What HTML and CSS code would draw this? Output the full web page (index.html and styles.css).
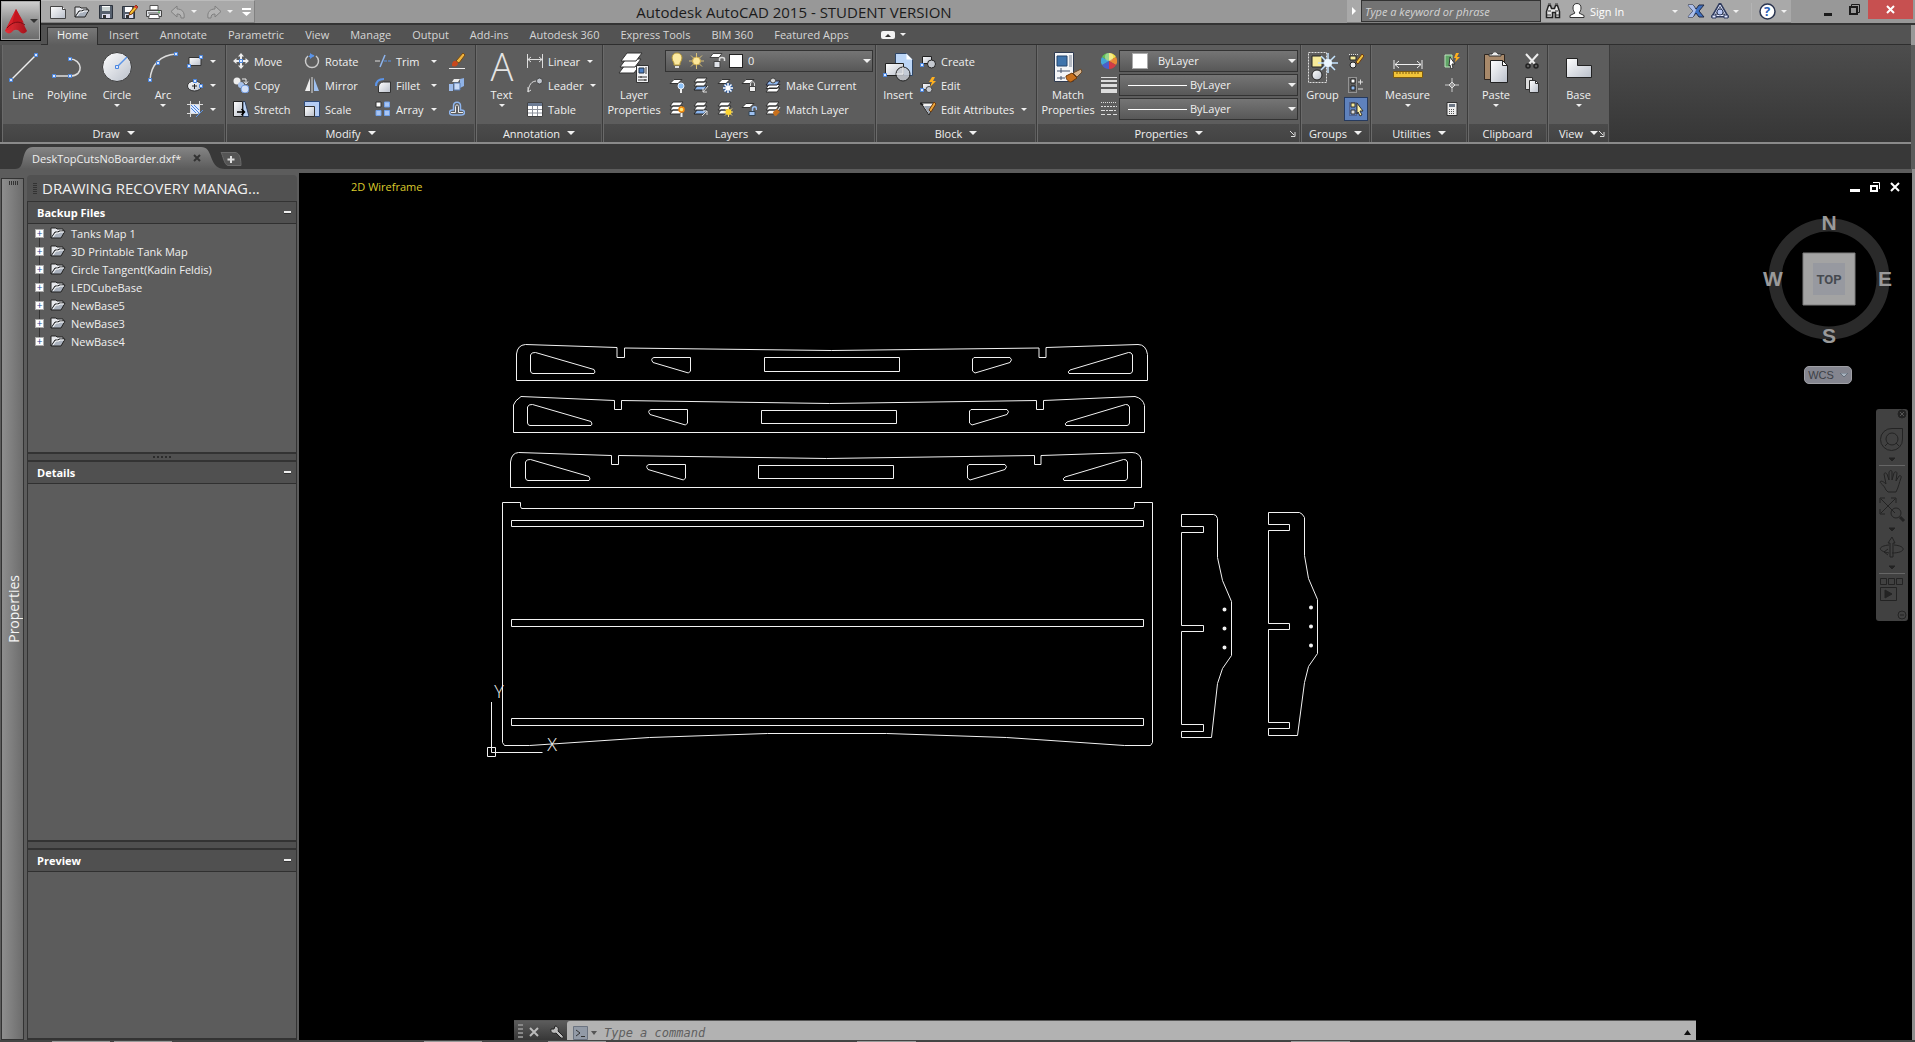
FILE: index.html
```html
<!DOCTYPE html>
<html lang="en">
<head>
<meta charset="utf-8">
<title>Autodesk AutoCAD 2015 - STUDENT VERSION</title>
<link rel="stylesheet" href="styles.css">
</head>
<body>
<svg class="defs" aria-hidden="true">
  <defs>
    <linearGradient id="silver" x1="0" y1="0" x2="1" y2="1"><stop offset="0" stop-color="#fff"/><stop offset="1" stop-color="#b9bfca"/></linearGradient>
    <linearGradient id="red" x1="0" y1="0" x2="1" y2="0"><stop offset="0" stop-color="#e8323a"/><stop offset="1" stop-color="#a5121b"/></linearGradient>
    <linearGradient id="tabfill" x1="0" y1="0" x2="0" y2="1"><stop offset="0" stop-color="#858585"/><stop offset="1" stop-color="#5c5c5c"/></linearGradient>
    <symbol id="folder" viewBox="0 0 16 12"><path d="M1 11V1h5l1 1h6v3" fill="#e6e8ec" stroke="#222"/><path d="M1 11 5 5h3l1-1h6l-4 7z" fill="#a9b1bd" stroke="#222"/><path d="M3 10 6 6h3l1-1h4" fill="none" stroke="#fff"/></symbol>
    <symbol id="sheet" viewBox="0 0 16 16"><path d="M5 2.500h8l-4 4H1z" fill="#fff" stroke="#333"/></symbol>
    <symbol id="sheets" viewBox="0 0 16 16"><path d="M4 9h10l-3 4H1zM4 5h10l-3 4H1zM4 1h10l-3 4H1z" fill="#fff" stroke="#333"/></symbol>
    <symbol id="sheetsblue" viewBox="0 0 16 16"><path d="M4 9h10l-3 4H1z" fill="#8bb6f0" stroke="#222"/><path d="M4 5h10l-3 4H1zM4 1h10l-3 4H1z" fill="#fff" stroke="#333"/></symbol>
  </defs>
</svg>

<header class="top">
  <button class="app" aria-label="Application menu">
    <svg width="24" height="26" viewBox="0 0 24 26"><path d="M12 1 23 23c-2 3-5 3-7 1-2-3-6-3-8 0-2 2-5 2-7-1z" fill="url(#red)"/><path d="M12 1 1 23l6-2z" fill="#d8222b"/><path d="M12 1 8 16c5-3 9-3 12-1z" fill="#c4161f"/><path d="M3 20c5-6 12-8 18-3" fill="none" stroke="#7d0c13"/></svg>
    <i class="caret dark"></i>
  </button>
  <div class="titlebar">
    <div class="quick">
      <button aria-label="New"><svg width="16" height="14" viewBox="0 0 16 14"><path d="M.5 1.500h12l3 3v9H.5z" fill="url(#silver)" stroke="#444"/><path d="M12.500 1.500v3h3" fill="#fff" stroke="#444"/></svg></button>
      <button aria-label="Open"><svg width="16" height="12"><use href="#folder"/></svg></button>
      <button aria-label="Save"><svg width="16" height="16" viewBox="0 0 16 16"><path d="M1.500 1.500h13v13h-13z" fill="#56606e" stroke="#2c323c"/><path d="M4 2h8v5H4z" fill="#fff"/><path d="M4 4h8M4 6h8" stroke="#9aa"/><path d="M4 10h8v4H4z" fill="#dde"/><path d="M5 11h3v3H5z" fill="#333"/></svg></button>
      <button aria-label="Save as"><svg width="16" height="16" viewBox="0 0 16 16"><path d="M.5 2.500h12v12H.5z" fill="#56606e" stroke="#2c323c"/><path d="M3 3h7v5H3z" fill="#fff"/><path d="M3 10h8v4H3z" fill="#dde"/><path d="M4 11h3v3H4z" fill="#333"/><path d="m7 11 1-3 6-7 2 2-6 7z" fill="#f5c030" stroke="#7a3a10"/><path d="m13 2 2 2" stroke="#d33" stroke-width="2"/></svg></button>
      <button aria-label="Plot"><svg width="16" height="16" viewBox="0 0 16 16"><path d="M4 1.500h8V6H4z" fill="#fff" stroke="#555"/><path d="M.5 6.500h15v6H.5z" fill="#e4e6ea" stroke="#444"/><path d="M2 9h12" stroke="#555"/><path d="M3.500 10.500h9l1 4h-11z" fill="#fff" stroke="#555"/><path d="M12 8h2" stroke="#4c4"/></svg></button>
      <button aria-label="Undo"><svg width="16" height="14" viewBox="0 0 16 14"><path d="M7 1v3c5 0 8 3 7 9h-3c0-3-1-4-4-4v3L1 6.500z" fill="#b4b4b4" stroke="#808080"/></svg></button>
      <i class="caret"></i>
      <button aria-label="Redo"><svg width="16" height="14" viewBox="0 0 16 14"><path d="M9 1v3C4 4 1 7 2 13h3c0-3 1-4 4-4v3l6-5.500z" fill="#b4b4b4" stroke="#808080"/></svg></button>
      <i class="caret"></i>
      <button aria-label="Customize" class="customize"><svg width="9" height="8" viewBox="0 0 9 8"><path d="M0 0h9v2H0zM0 4h9L4.500 8z" fill="#fff"/></svg></button>
    </div>
    <h1>Autodesk AutoCAD 2015 - STUDENT VERSION</h1>
    <div class="info">
      <button class="expand" aria-label="Collapse search"><svg width="4" height="8"><path d="M0 0l4 4-4 4z" fill="#fff"/></svg></button>
      <input class="search" type="text" placeholder="Type a keyword or phrase" aria-label="Search">
      <button class="find" aria-label="Search"><svg width="16" height="16" viewBox="0 0 16 16"><path d="M1.500 14.500v-6l2-6h2l1 3h3l1-3h2l2 6v6h-4v-5h-3v5z" fill="#e8e8e8" stroke="#222" stroke-width="1.500"/><path d="M3 8h3M10 8h3M2 12h4M10 12h4M3 1h3M10 1h3" stroke="#333"/></svg></button>
      <button class="signin"><svg width="16" height="16" viewBox="0 0 16 16"><path d="M8 .5c3 0 4 2 4 4.500 0 2-1 4-2 5l5 2.500v2H1v-2L6 10c-1-1-2-3-2-5C4 2.500 5 .5 8 .5z" fill="#fff" stroke="#333"/></svg>Sign In<i class="caret"></i></button>
      <button aria-label="Exchange"><svg width="18" height="16" viewBox="0 0 18 16"><path d="M1 2h5l3 4 3-4h5l-5 6 5 6h-5l-3-4-3 4H1l5-6z" fill="#3d6fc0" stroke="#222a44"/><path d="M1 2h5l3 5-3 7H1l5-6z" fill="#aebfe8"/></svg></button>
      <button class="connect" aria-label="Stay connected"><svg width="18" height="16" viewBox="0 0 18 16"><path d="M9 1 16 13H2z" fill="none" stroke="#2f3b5e" stroke-width="3"/><path d="M9 2 15 12.500H3z" fill="none" stroke="#e6ebff"/><circle cx="9" cy="9" r="3" fill="#b9c8f2" stroke="#2f3b5e"/><path d="M1 12h4v3H1zM13 12h4v3h-4z" fill="#dfe6ff" stroke="#2f3b5e"/></svg><i class="caret"></i></button>
      <button class="help" aria-label="Help"><svg width="17" height="17" viewBox="0 0 17 17"><circle cx="8.500" cy="8.500" r="7.500" fill="#fff" stroke="#2b3550" stroke-width="1.500"/><text x="8" y="13" text-anchor="middle" class="qmark">?</text></svg><i class="caret"></i></button>
    </div>
    <div class="window">
      <button aria-label="Minimize"><svg width="10" height="12"><path d="M1 9h8v3H1z" fill="#1b1b1b"/></svg></button>
      <button aria-label="Restore"><svg width="11" height="11" viewBox="0 0 11 11"><path d="M2.500 2.500v-2h8v8h-2" fill="none" stroke="#1b1b1b"/><path d="M1 3h7v7H1z" fill="none" stroke="#1b1b1b" stroke-width="2"/></svg></button>
      <button class="close" aria-label="Close"><svg width="9" height="9"><path d="M1 1l7 7M8 1 1 8" stroke="#fff" stroke-width="2"/></svg></button>
    </div>
  </div>
  <nav class="tabs">
    <a href="#home" class="on">Home</a><a href="#insert">Insert</a><a href="#annotate">Annotate</a><a href="#parametric">Parametric</a><a href="#view">View</a><a href="#manage">Manage</a><a href="#output">Output</a><a href="#addins">Add-ins</a><a href="#a360">Autodesk 360</a><a href="#express">Express Tools</a><a href="#bim">BIM 360</a><a href="#apps">Featured Apps</a>
    <button class="fold" aria-label="Minimize ribbon"><svg width="14" height="8" viewBox="0 0 14 8"><rect width="14" height="8" rx="2" fill="#f2f2f2"/><path d="M4 6h6L7 3z" fill="#333"/></svg><i class="caret"></i></button>
  </nav>
</header>

<main class="ribbon">
  <section class="panel draw">
    <div class="body">
      <button class="big"><svg width="32" height="32" viewBox="0 0 32 32"><path d="M4 28 29 3" stroke="#eee" stroke-width="1.500"/><g class="grip"><path d="M2.500 26.500h3v3h-3zM27.500 1.500h3v3h-3z"/></g></svg>Line</button>
      <button class="big"><svg width="32" height="32" viewBox="0 0 32 32"><path d="M3 24h16c15 0 12-17 0-17" fill="none" stroke="#ddd" stroke-width="1.500"/><g class="grip"><path d="M1.500 22.500h3v3h-3zM17.500 22.500h3v3h-3zM17.500 5.500h3v3h-3z"/></g></svg>Polyline</button>
      <button class="big"><svg width="32" height="32" viewBox="0 0 32 32"><circle cx="16" cy="15" r="14.500" fill="url(#silver)" stroke="#3b3b3b"/><path d="m16 15 10-10" stroke="#5b94e8" stroke-width="1.500"/><g class="grip"><path d="M14.500 13.500h3v3h-3z"/></g></svg>Circle<i class="caret"></i></button>
      <button class="big"><svg width="32" height="32" viewBox="0 0 32 32"><path d="M3 28C4 12 14 3 29 2" fill="none" stroke="#ddd" stroke-width="1.500"/><g class="grip"><path d="M1.500 26.500h3v3h-3zM9.500 9.500h3v3h-3zM27.500.5h3v3h-3z"/></g></svg>Arc<i class="caret"></i></button>
      <div class="col">
        <button class="cmd" aria-label="Rectangle"><svg width="16" height="16" viewBox="0 0 16 16"><path d="M2 4.500h12v8H2z" fill="url(#silver)" stroke="#333"/><g class="grip"><path d="M.5 11.500h3v3h-3zM12.500 2.500h3v3h-3z"/></g></svg><i class="caret"></i></button>
        <button class="cmd" aria-label="Ellipse"><svg width="16" height="16" viewBox="0 0 16 16"><ellipse cx="7.500" cy="9" rx="7" ry="5" fill="url(#silver)" stroke="#333"/><path d="M5 9h5M7.500 7v5" stroke="#222"/><g class="grip"><path d="M6.500 2.500h3v3h-3zM12.500 7.500h3v3h-3z"/></g></svg><i class="caret"></i></button>
        <button class="cmd" aria-label="Hatch"><svg width="16" height="16" viewBox="0 0 16 16"><path d="M3.500 3.500h9v9h-9z" fill="#dfeaff"/><path d="m4 7 5 5M4 4l8 8M7 4l5 5" stroke="#4a86e0"/><path d="M3.500 0v16M12.500 0v12M0 3.500h16M0 12.500h11" stroke="#ddd"/><path d="m9 16 7-7" stroke="#5b94e8"/></svg><i class="caret"></i></button>
      </div>
    </div>
    <h2>Draw<i class="caret wide"></i></h2>
  </section>

  <section class="panel modify">
    <div class="body">
      <div class="col">
        <button class="cmd"><svg width="16" height="16" viewBox="0 0 16 16"><path d="m8 0 3 3.500H9V6H7V3.500H5zM8 16l3-3.500H9V10H7v2.500H5zM0 8l3.500-3v2H6v2H3.500v2zM16 8l-3.500-3v2H10v2h2.500v2z" fill="#eee"/><g class="grip"><path d="M6.500 6.500h3v3h-3z"/></g></svg>Move</button>
        <button class="cmd"><svg width="16" height="16" viewBox="0 0 16 16"><circle cx="4" cy="4" r="3.500" fill="#eee"/><path d="M9 2h4v4M11 4.500 13 7l2-2.500" fill="none" stroke="#eee"/><circle cx="8" cy="8" r="3" fill="#a9c2ea"/><circle cx="12" cy="12" r="4" fill="#d3e0f7" stroke="#6f9ade"/></svg>Copy</button>
        <button class="cmd"><svg width="16" height="16" viewBox="0 0 16 16"><path d="M10 .5h2l4 15h-6z" fill="#bcd4f6" stroke="#30405c"/><path d="M.5.5h9v15h-9z" fill="url(#silver)" stroke="#222"/><path d="M4 11h7M8.500 8l3 3-3 3" fill="none" stroke="#000" stroke-width="1.500"/></svg>Stretch</button>
      </div>
      <div class="col">
        <button class="cmd"><svg width="16" height="16" viewBox="0 0 16 16"><path d="M4 3a6.500 6.500 0 1 0 8 0" fill="none" stroke="#ccc" stroke-width="1.500"/><path d="M5 4c1-2 3-2 5-1" fill="none" stroke="#5b94e8" stroke-width="1.500"/><path d="m6 0 4 3-4 3z" fill="#5b94e8"/></svg>Rotate</button>
        <button class="cmd"><svg width="16" height="16" viewBox="0 0 16 16"><path d="M6 1v13H1z" fill="#eee"/><path d="M10 1v13h5z" fill="#9fc0ee"/><path d="M8 0v16" stroke="#ddd"/></svg>Mirror</button>
        <button class="cmd"><svg width="16" height="16" viewBox="0 0 16 16"><path d="M.5.5h15v15H.5z" fill="#b5cdf4" stroke="#2d4a7a"/><path d="M.5 5.500h10v10H.5z" fill="url(#silver)" stroke="#333"/></svg>Scale</button>
      </div>
      <div class="col trim">
        <button class="cmd"><svg width="16" height="16" viewBox="0 0 16 16"><path d="M0 8h5" stroke="#ddd"/><path d="M9 8h3M13 8h3" stroke="#5b94e8"/><path d="m5 14 5-12" stroke="#8eb5ee" stroke-width="1.500"/></svg>Trim<i class="caret"></i></button>
        <button class="cmd"><svg width="16" height="16" viewBox="0 0 16 16"><path d="M3.500 15.500V10c0-3 2-5 5-5h7v10.500z" fill="url(#silver)" stroke="#333"/><path d="M1 9c0-5 3-7 8-7" fill="none" stroke="#5b94e8" stroke-width="2"/></svg>Fillet<i class="caret"></i></button>
        <button class="cmd"><svg width="16" height="16" viewBox="0 0 16 16"><path d="M1 1h5v5H1z" fill="#fff" stroke="#333"/><path d="M9.500 1h5v5h-5zM1 9.500h5v5H1zM9.500 9.500h5v5h-5z" fill="#a9c5f2" stroke="#6fa0ea"/></svg>Array<i class="caret"></i></button>
      </div>
      <div class="col">
        <button class="cmd" aria-label="Erase"><svg width="16" height="16" viewBox="0 0 16 16"><path d="m7 8 7-8 2 2-6 8z" fill="#f0b540" stroke="#7a4a10"/><path d="M3 12c0-3 2-5 4-4l2 2c0 3-3 4-6 3z" fill="#c9481c"/><path d="M0 15.500h16" stroke="#eee"/></svg></button>
        <button class="cmd" aria-label="Explode"><svg width="16" height="16" viewBox="0 0 16 16"><path d="m3 5 2-3h6l-2 3z" fill="#eee"/><path d="m11 2 4-1v8l-4 2z" fill="#8fb2e6"/><path d="M0 7h4v7H0z" fill="#9dbcec"/><path d="M5 6h6v7H5z" fill="#c8daf6" stroke="#5a7fb5"/></svg></button>
        <button class="cmd" aria-label="Offset"><svg width="16" height="16" viewBox="0 0 16 16"><path d="M4.500 9V5c0-5 7-5 7 0v4h1c4 0 4 5 0 5h-9c-4 0-4-5 0-5z" fill="none" stroke="#8eb5ee" stroke-width="1.500"/><path d="M2 11.500h4.500V5.500c0-2 3-2 3 0v6H14" fill="none" stroke="#eee"/></svg></button>
      </div>
    </div>
    <h2>Modify<i class="caret wide"></i></h2>
  </section>

  <section class="panel annotation">
    <div class="body">
      <button class="big"><svg width="32" height="32" viewBox="0 0 32 32"><text x="16" y="29" text-anchor="middle" class="letter">A</text></svg>Text<i class="caret"></i></button>
      <div class="col">
        <button class="cmd"><svg width="16" height="16" viewBox="0 0 16 16"><path d="M.5 1v14M15.500 1v14M1 6.500h14M4 4 1 6.500 4 9M12 4l3 2.500L12 9" fill="none" stroke="#ddd"/></svg>Linear<i class="caret"></i></button>
        <button class="cmd"><svg width="16" height="16" viewBox="0 0 16 16"><path d="M1 15C2 8 4 4 10 4M1 10v5l3-2" fill="none" stroke="#ddd"/><circle cx="12.500" cy="4" r="3" fill="#bfc4cc" stroke="#444"/></svg>Leader<i class="caret"></i></button>
        <button class="cmd"><svg width="16" height="16" viewBox="0 0 16 16"><path d="M.5 1.500h15v14H.5z" fill="#fff" stroke="#444"/><path d="M1 2h14v3H1z" fill="#6d7c94"/><path d="M1 8.500h14M1 12h14M5.500 5v10M10.500 5v10" stroke="#8a8f99"/></svg>Table</button>
      </div>
    </div>
    <h2>Annotation<i class="caret wide"></i></h2>
  </section>

  <section class="panel layers">
    <div class="body">
      <button class="big"><svg width="32" height="32" viewBox="0 0 32 32"><path d="M7 13h15l-6 8H1z" fill="#fff" stroke="#333"/><path d="M8 7h15l-6 8H2z" fill="#fff" stroke="#333"/><path d="M9 1h15l-6 8H3z" fill="#fff" stroke="#333"/><path d="M18.500 13.500h12v17h-12z" fill="#f2f3f5" stroke="#333"/><path d="M21 16h5v5h-5z" fill="#4d7fc4" stroke="#234"/><path d="M28 15v7" stroke="#999" stroke-width="2"/><path d="M20 25h9M20 28h9M23 24v2M27 27v2" stroke="#333"/></svg>Layer<br>Properties</button>
      <div class="stack">
        <div class="combo layer">
          <svg width="58" height="18" viewBox="0 0 58 18"><path d="M3 11C-1 5 2 1 6 1s7 4 3 10v2H3z" fill="#fbe9a0" stroke="#b99b3a"/><path d="M4 14h4v2H4z" fill="#ddd"/><g stroke="#d9c27a"><path d="M25.500 1v16M18 9h15M20 3.500l11 11M31 3.500l-11 11"/></g><circle cx="25.500" cy="9" r="4" fill="#fde89b" stroke="#c9a84c"/><path d="M42 1.500h9l-3 4h-9z" fill="#fff" stroke="#444"/><path d="M43 9.500h6v6h-6z" fill="#dfe2e8" stroke="#444"/><path d="M48.500 9V7c0-2 5-2 5 0v2" fill="none" stroke="#ddd" stroke-width="1.500"/></svg>
          <span class="swatch"></span>
          <select aria-label="Layer"><option>0</option></select><i class="caret wide"></i>
        </div>
        <div class="grid">
          <button class="cmd" aria-label="Off"><svg width="16" height="16"><use href="#sheet"/><circle cx="12" cy="9" r="3" fill="#8cc0f7" stroke="#e8f2ff"/><path d="M12 12v4" stroke="#eee" stroke-width="2"/></svg></button>
          <button class="cmd" aria-label="Isolate"><svg width="16" height="16"><use href="#sheetsblue"/><path d="m15 9-5 6m0-4v4h4" fill="none" stroke="#ddd"/></svg></button>
          <button class="cmd" aria-label="Freeze"><svg width="16" height="16"><use href="#sheet"/><circle cx="11" cy="11" r="5" fill="#2d5a9c"/><g stroke="#fff" stroke-width="1.500"><path d="M11 6v10M6 11h10M7.500 7.500l7 7M14.500 7.500l-7 7"/></g></svg></button>
          <button class="cmd" aria-label="Lock"><svg width="16" height="16"><use href="#sheet"/><path d="M8.500 9.500h6v5h-6z" fill="#eee" stroke="#444"/><path d="M9.500 9V7c0-3 4-3 4 0v2" fill="none" stroke="#ddd"/></svg></button>
          <button class="cmd"><svg width="16" height="16"><path d="M4 11h11l-3 4H1zM4 7.500h11l-3 4H1z" fill="#fff" stroke="#333"/><path d="M4 4h11l-3 4H1z" fill="#8fb8ee" stroke="#223"/><circle cx="8" cy="3.500" r="2.500" fill="#ddd" stroke="#444"/></svg>Make Current</button>
          <button class="cmd" aria-label="Turn all on"><svg width="16" height="16"><use href="#sheets"/><circle cx="12.500" cy="8.500" r="2.500" fill="#ffe87a" stroke="#f08a10" stroke-width="1.500"/><path d="M12.500 12v4" stroke="#eee" stroke-width="2"/></svg></button>
          <button class="cmd" aria-label="Unisolate"><svg width="16" height="16"><use href="#sheetsblue"/><path d="m9 15 5-5m-4 0h4v4" fill="none" stroke="#ddd"/></svg></button>
          <button class="cmd" aria-label="Thaw all"><svg width="16" height="16"><use href="#sheets"/><path d="M11.500 6v10M6.500 11h10M8 7.500l7 7M15 7.500l-7 7" stroke="#ffe680"/><circle cx="11.500" cy="11" r="3" fill="#ffd62e"/></svg></button>
          <button class="cmd" aria-label="Unlock"><svg width="16" height="16"><use href="#sheet"/><path d="M8 10.500h6v4H8z" fill="#9dc0f0" stroke="#345"/><path d="M11.500 10V8c0-3 4-3 4 0v1" fill="none" stroke="#9dc0f0" stroke-width="1.500"/></svg></button>
          <button class="cmd"><svg width="16" height="16"><use href="#sheets"/><path d="m8 11 4-3 3 3-4 4c-2 0-3-2-3-4z" fill="#c8701c"/><path d="m13 9 2-3" stroke="#eee"/></svg>Match Layer</button>
        </div>
      </div>
    </div>
    <h2>Layers<i class="caret wide"></i></h2>
  </section>

  <section class="panel block">
    <div class="body">
      <button class="big"><svg width="32" height="32" viewBox="0 0 32 32"><path d="M13.500 1.500h11l6 6v16h-17z" fill="#bcd6f7" stroke="#2f4666"/><path d="M24.500 1.500v6h6z" fill="#fff"/><path d="M3.500 11.500h18v12h-18z" fill="url(#silver)" stroke="#222"/><circle cx="21" cy="22" r="7" fill="#c5c9d0" fill-opacity=".85" stroke="#222"/><path d="M21 15v7h-7" fill="none" stroke="#eee"/><g class="grip"><path d="M1.500 21.500h3v3h-3z"/></g></svg>Insert</button>
      <div class="col">
        <button class="cmd"><svg width="16" height="16" viewBox="0 0 16 16"><path d="M2.500 3.500h9v7h-9z" fill="url(#silver)" stroke="#222"/><circle cx="11.500" cy="11" r="4" fill="#c5c9d0" stroke="#222"/><g class="grip"><path d="M.5 10.500h3v3h-3z"/></g></svg>Create</button>
        <button class="cmd"><svg width="16" height="16" viewBox="0 0 16 16"><path d="M2.500 6.500h8v6h-8z" fill="url(#silver)" stroke="#444"/><circle cx="9" cy="12.500" r="3" fill="#c5c9d0" stroke="#444"/><path d="m12 0-3 5h3l-2 5 6-6h-3l2-4z" fill="#ffb01e"/><g class="grip"><path d="M.5 11.500h3v3h-3z"/></g></svg>Edit</button>
        <button class="cmd"><svg width="16" height="16" viewBox="0 0 16 16"><path d="M1 2h13l-5 12z" fill="#f3f3f3" stroke="#222"/><path d="m4 5 5 8 3-8z" fill="#9aa3b0"/><path d="m9 9 5-8 2 2-5 8z" fill="#eaa43a" stroke="#6a3a10"/><path d="M0 2l3 2" stroke="#222" stroke-width="2"/></svg>Edit Attributes<i class="caret"></i></button>
      </div>
    </div>
    <h2>Block<i class="caret wide"></i></h2>
  </section>

  <section class="panel props">
    <div class="body">
      <button class="big"><svg width="32" height="32" viewBox="0 0 32 32"><path d="M2.500.5h19v29h-19z" fill="#f4f5f7" stroke="#2e3a50"/><path d="M5 4h10v10H5z" fill="#3f74ac" stroke="#24456c"/><path d="M18.500 3v12" stroke="#b4bac4" stroke-width="3"/><path d="M5 19h13M9 16v5M5 26h8M9 24v4" stroke="#45536b"/><path d="m21 21 8-4 1 3-5 5z" fill="#d8b48c" stroke="#6a4a2a"/><path d="m14 24 6-3 5 5-6 4c-2 0-5-2-5-6z" fill="#c8701c" stroke="#6e3808"/></svg>Match<br>Properties</button>
      <div class="lines">
        <svg width="16" height="16" viewBox="0 0 16 16"><path d="M8 8V0a8 8 0 0 1 7 4z" fill="#f2e24a"/><path d="m8 8 7-4a8 8 0 0 1 0 8z" fill="#e98a35"/><path d="m8 8 7 4a8 8 0 0 1-7 4z" fill="#d23c46"/><path d="M8 8v8a8 8 0 0 1-7-4z" fill="#4a5ecb"/><path d="M8 8 1 12a8 8 0 0 1 0-8z" fill="#43a6d8"/><path d="M8 8 1 4a8 8 0 0 1 7-4z" fill="#63c253"/><circle cx="8" cy="4" r="4" fill="#fff" fill-opacity=".35"/></svg>
        <div class="combo"><span class="swatch"></span><select aria-label="Object colour"><option>ByLayer</option></select><i class="caret wide"></i></div>
        <svg width="16" height="16" viewBox="0 0 16 16"><path d="M0 0h16v1H0zM0 3h16v2H0zM0 7h16v3H0zM0 12h16v4H0z" fill="#ddd"/></svg>
        <div class="combo"><span class="rule"></span><select aria-label="Lineweight"><option>ByLayer</option></select><i class="caret wide"></i></div>
        <svg width="16" height="16" viewBox="0 0 16 16"><g stroke="#ddd"><path d="M0 1.500h16" stroke-dasharray="1 1"/><path d="M0 5.500h16" stroke-dasharray="2 1"/><path d="M0 9.500h16" stroke-dasharray="4 1 2 1"/><path d="M0 13.500h16" stroke-dasharray="4 2"/></g></svg>
        <div class="combo"><span class="rule"></span><select aria-label="Linetype"><option>ByLayer</option></select><i class="caret wide"></i></div>
      </div>
    </div>
    <h2>Properties<i class="caret wide"></i><svg class="launch" width="6" height="6"><path d="M0 0l4 4M5 1v4.500H1" fill="none" stroke="#ddd"/></svg></h2>
  </section>

  <section class="panel groups">
    <div class="body">
      <button class="big"><svg width="32" height="32" viewBox="0 0 32 32"><path d="M1.500.5h18v30h-18z" fill="none" stroke="#ddd" stroke-dasharray="2 1"/><path d="M5 4h10v11H5z" fill="#f7eb9a" stroke="#222"/><circle cx="10" cy="23" r="5" fill="url(#silver)" stroke="#222"/><g stroke="#c5e4ff" stroke-width="1.500"><path d="M21 1v20M11 11h20M14 4l14 14M28 4 14 18"/></g><circle cx="21" cy="11" r="4" fill="#eaf6ff"/></svg>Group</button>
      <div class="col">
        <button class="cmd" aria-label="Group edit"><svg width="16" height="16" viewBox="0 0 16 16"><path d="M1 1.500h9" stroke="#ddd" stroke-dasharray="1 1"/><path d="M2 3h6v4H2z" fill="#f7eb9a" stroke="#222"/><circle cx="5" cy="12" r="3" fill="#eee" stroke="#222"/><path d="m8 9 6-8 2 2-6 8z" fill="#efc13d" stroke="#6e3a10"/></svg></button>
        <button class="cmd" aria-label="Ungroup"><svg width="16" height="16" viewBox="0 0 16 16"><path d="M.5.5h8v15h-8z" fill="none" stroke="#ccc" stroke-dasharray="1 1"/><path d="M3 2h4v4H3z" fill="#fff" stroke="#222"/><path d="M3 9h4v4H3z" fill="#8fb8ee" stroke="#222"/><path d="M10 5h5M12.500 2.500v5M10 12h5" stroke="#ddd"/></svg></button>
        <button class="cmd active" aria-label="Group selection on"><svg width="16" height="16" viewBox="0 0 16 16"><path d="M1.500 1.500h7v13h-7z" fill="none" stroke="#446" stroke-dasharray="1 1"/><path d="M3 2h4v4H3z" fill="#f7eb9a" stroke="#333"/><path d="M3 9h4v4H3z" fill="#ddd" stroke="#333"/><path d="m9 2 6 8h-3l2 4-2 1-2-4-1 2z" fill="#fff3a8" stroke="#333"/></svg></button>
      </div>
    </div>
    <h2>Groups<i class="caret wide"></i></h2>
  </section>

  <section class="panel utilities">
    <div class="body">
      <button class="big"><svg width="32" height="32" viewBox="0 0 32 32"><path d="M2 8v9M30 8v9M3 12.500h26M7 9l-4 3.500L7 16M25 9l4 3.500-4 3.500" fill="none" stroke="#eee"/><path d="M1.500 19.500h29v6h-29z" fill="#f2c53a" stroke="#7c5a10"/><path d="M5 20v2M8 20v2M11 20v2M14 20v2M17 20v2M20 20v2M23 20v2M26 20v2" stroke="#7c5a10"/></svg>Measure<i class="caret"></i></button>
      <div class="col">
        <button class="cmd" aria-label="Quick select"><svg width="16" height="16" viewBox="0 0 16 16"><path d="M1 2h7v12H1z" fill="#5fa566" stroke="#bfe5bf"/><path d="m6 4 5 7H8l1 4-2 1-1-4-1 1z" fill="#fff" stroke="#333"/><path d="m12 0-2 5h2l-1 4 5-5h-3l2-4z" fill="#ffb01e"/></svg></button>
        <button class="cmd" aria-label="ID point"><svg width="16" height="16" viewBox="0 0 16 16"><path d="M8 1v14M1 8h14" stroke="#ccc"/><path d="m8 5 3 3-3 3-3-3z" fill="#999" stroke="#ddd"/></svg></button>
        <button class="cmd" aria-label="Calculator"><svg width="16" height="16" viewBox="0 0 16 16"><path d="M3 1.500h10v13H3z" fill="#eee" stroke="#333"/><path d="M5 3h6v3H5z" fill="#6c7684"/><path d="M5 8.500h6M5 10.500h6M5 12.500h6" stroke="#555" stroke-dasharray="1 1"/></svg></button>
      </div>
    </div>
    <h2>Utilities<i class="caret wide"></i></h2>
  </section>

  <section class="panel clipboard">
    <div class="body">
      <button class="big"><svg width="32" height="32" viewBox="0 0 32 32"><path d="M4.500 2.500h20v25h-20z" fill="#a8896a" stroke="#2e2620"/><path d="M9 4V2h3c1-3 5-3 6 0h3v2z" fill="#eee" stroke="#333"/><path d="M10.500 8.500h12l5 5v17h-17z" fill="url(#silver)" stroke="#222"/><path d="M22.500 8.500v5h5z" fill="#fff" stroke="#222"/></svg>Paste<i class="caret"></i></button>
      <div class="col">
        <button class="cmd" aria-label="Cut"><svg width="16" height="16" viewBox="0 0 16 16"><path d="m2 1 9 10M14 1 5 11" stroke="#eee" stroke-width="2"/><circle cx="4" cy="13" r="2" fill="none" stroke="#222" stroke-width="1.500"/><circle cx="12" cy="13" r="2" fill="none" stroke="#222" stroke-width="1.500"/></svg></button>
        <button class="cmd" aria-label="Copy clip"><svg width="16" height="16" viewBox="0 0 16 16"><path d="M1.500.5h7v12h-7z" fill="#ddd" stroke="#333"/><path d="M5.500 3.500h6l3 3v9h-9z" fill="url(#silver)" stroke="#333"/><path d="M11.500 3.500v3h3z" fill="#fff" stroke="#333"/></svg></button>
      </div>
    </div>
    <h2>Clipboard</h2>
  </section>

  <section class="panel view">
    <div class="body">
      <button class="big"><svg width="32" height="32" viewBox="0 0 32 32"><path d="M3.500 6.500h11v7h14v12h-25z" fill="url(#silver)" stroke="#222"/></svg>Base<i class="caret"></i></button>
    </div>
    <h2>View<i class="caret wide"></i><svg class="launch" width="6" height="6"><path d="M0 0l4 4M5 1v4.500H1" fill="none" stroke="#ddd"/></svg></h2>
  </section>
</main>

<div class="files">
  <div class="file">
    <svg class="shape" width="212" height="22" viewBox="0 0 212 22"><path d="M0 22c6 0 7-5 8-10 2-8 4-12 10-12h168c6 0 8 4 10 10 3 8 6 12 14 12z" fill="url(#tabfill)"/></svg>
    <a href="#file">DeskTopCutsNoBoarder.dxf*</a>
    <button aria-label="Close file"><svg width="8" height="8"><path d="M1 1l6 6M7 1 1 7" stroke="#333" stroke-width="2"/></svg></button>
  </div>
  <button class="newfile" aria-label="New drawing"><svg width="22" height="14" viewBox="0 0 22 14"><path d="M1 .5h14c4 0 6 5 6 13H8C4 13 3 3 1 .5z" fill="#555" stroke="#6a6a6a"/><path d="M11 4v7M7.500 7.500h7" stroke="#ddd" stroke-width="2"/></svg></button>
</div>

<div class="work">
  <aside class="strip"><span class="dots"></span><span class="vertical">Properties</span></aside>
  <aside class="recovery">
    <h2><span class="griphandle"></span>DRAWING RECOVERY MANAG...</h2>
    <section class="backup">
      <h3>Backup Files<button aria-label="Collapse backup files"></button></h3>
      <ul>
        <li><button aria-label="Expand">+</button><svg width="16" height="12"><use href="#folder"/></svg>Tanks Map 1</li>
        <li><button aria-label="Expand">+</button><svg width="16" height="12"><use href="#folder"/></svg>3D Printable Tank Map</li>
        <li><button aria-label="Expand">+</button><svg width="16" height="12"><use href="#folder"/></svg>Circle Tangent(Kadin Feldis)</li>
        <li><button aria-label="Expand">+</button><svg width="16" height="12"><use href="#folder"/></svg>LEDCubeBase</li>
        <li><button aria-label="Expand">+</button><svg width="16" height="12"><use href="#folder"/></svg>NewBase5</li>
        <li><button aria-label="Expand">+</button><svg width="16" height="12"><use href="#folder"/></svg>NewBase3</li>
        <li><button aria-label="Expand">+</button><svg width="16" height="12"><use href="#folder"/></svg>NewBase4</li>
      </ul>
    </section>
    <div class="splitter"><span></span></div>
    <section class="details"><h3>Details<button aria-label="Collapse details"></button></h3></section>
    <div class="splitter"></div>
    <section class="preview"><h3>Preview<button aria-label="Collapse preview"></button></h3></section>
  </aside>

  <div class="canvas">
    <svg class="model" role="img" aria-label="Desk top cut parts">
      <defs>
        <g id="holes">
          <path d="M530.500 371V355q1-3 5-2.500L594 369.500q2 3 0 4H533q-2 0-2.500-2.500zM654 357.500H690.500V371l-2 2L653 362.500q-3-4 1-5zM974 357.500h36q3 2 0 5L975 373l-2.500-2V359zM1132.500 371V355q-1-3-4-2.500L1070 370q-3 2-1 3.500h61q2 0 2.500-2.500z"/>
        </g>
      </defs>
      <g transform="translate(-299 -173)" class="ink">
        <path d="M516.500 380.500V354q1-9 9-9.500l91.500 3v10h7.500v-9.500l207 2.500 207.500-2.500v9.500h7V347.500L1138 344.500q8 0 9.500 10v26z"/>
        <path d="M513.500 432.500V405q1-4 7.500-8.500l93.500 4v9h7v-9l208 3 207-3v9h7v-9L1135 396.500q8 2 9.500 9v27z"/>
        <path d="M510.500 487.500V462q1-9 8-9.500l93 3v9h7v-9l208 3 208-3v9h6.500v-9L1132 452.500q8 0 9.500 8v27z"/>
        <use href="#holes"/><use href="#holes" transform="translate(-3 52)"/><use href="#holes" transform="translate(-5 107)"/>
        <path d="M764.500 357.500h135v14h-135zM761.500 410.500h135v13h-135zM758.500 465.500h135v13h-135z"/>
        <path d="M502.500 742.500v-240h18v4l1 2h612l1-2v-4h18v240l-2 3h-26l-118-8-120-4h-119l-118 4-120 8h-25z"/>
        <path d="M511.500 520.500h632v6h-632zM511.500 619.500h632v7h-632zM511.500 718.500h632v7h-632z"/>
        <path d="M1181.500 514.500h32q3 0 4 4v39l5 23 9 21v54l-9 13-5 15-6 54h-30v-6h22v-7h-22v-93h22v-6h-22v-93h22v-6h-22z"/>
        <path d="M1268.500 512.500h31q3 1 5 5v38l4 23 9 21v54l-9 13-4 16-7 53h-29v-7h21v-6h-21v-93h21v-6h-21v-93h21v-6h-21z"/>
        <g class="drill"><circle cx="1224.500" cy="609.500" r="1"/><circle cx="1224.500" cy="628.500" r="1"/><circle cx="1224.500" cy="647.500" r="1"/><circle cx="1311" cy="607.500" r="1"/><circle cx="1311" cy="626.500" r="1"/><circle cx="1311" cy="645.500" r="1"/></g>
        <path d="M487.500 747.500h8v9h-8zM491.500 702v50.500h51"/>
        <g class="axis"><text x="499" y="698" text-anchor="middle">Y</text><text x="552" y="751" text-anchor="middle">X</text></g>
      </g>
    </svg>
    <a class="style" href="#visual-style">2D Wireframe</a>
    <div class="viewwin">
      <button aria-label="Minimize view"><svg width="10" height="12"><path d="M0 8h10v3H0z" fill="#fff"/></svg></button>
      <button aria-label="Restore view"><svg width="10" height="12" viewBox="0 0 10 12"><path d="M1 5h6v5H1z" fill="none" stroke="#fff" stroke-width="2"/><path d="M3 1.500h6.500V8" fill="none" stroke="#fff"/></svg></button>
      <button aria-label="Close view"><svg width="10" height="12"><path d="M1 2l8 8M9 2 1 10" stroke="#fff" stroke-width="2"/></svg></button>
    </div>
    <svg class="cube" width="140" height="140" viewBox="0 0 140 140" role="img" aria-label="View cube"><circle cx="70" cy="70" r="54" fill="none" stroke="#2a2a2a" stroke-width="13"/><path d="M44 44h52v52H44z" fill="#a3a3a3" stroke="#7c7c7c"/><path d="M54 54h32v32H54z" fill="#9799a0"/><text x="70" y="75" class="face">TOP</text><text x="70" y="21">N</text><text x="70" y="134">S</text><text x="14" y="77">W</text><text x="126" y="77">E</text></svg>
    <button class="wcs">WCS<svg width="8" height="5"><path d="M0 0h8L4 4z" fill="#a9b4c0" stroke="#66707c"/></svg></button>
    <div class="navbar">
      <svg width="32" height="212" viewBox="0 0 32 212" fill="none" stroke="#232323"><circle cx="26" cy="5" r="4" fill="#232323"/><path d="m24 3 4 4m0-4-4 4" stroke="#555"/><path d="M16 19.500h10.500V30A11 11 0 1 1 16 19.500z"/><circle cx="16" cy="30" r="6"/><path d="m9 37 3-3m11 3-3-3"/><path d="M13 49h6l-3 3z" fill="#232323"/><path d="M3 56.500h26M3 164.500h26" stroke="#666"/><path d="M10 81C8 76 5 75 4 73c1-2 4 0 6 2L8 65c1-2 2-1 3 0l2 6V63c1-2 3-2 3 0v8l2-7c1-2 3-1 3 0l-1 8 3-5c1-1 3 0 2 2-2 5-2 8-5 14h-8z"/><path d="m5 90 14 14m0-14L5 104M4 94v-5h5M15 89h5v5M4 100v5h5"/><circle cx="20" cy="104" r="5"/><path d="m24 108 4 4" stroke-width="3"/><path d="M13 119h6l-3 3zM13 157h6l-3 3z" fill="#232323"/><path d="M14 148v-14h-2l4-6 3 6h-2v14z"/><path d="M13 144C1 142 2 137 13 136m5 0c13 1 12 8-2 8M12 140l-4 3 4 3" /><path d="M4.500 169.500h6v6h-6zM12.500 169.500h6v6h-6zM20.500 169.500h6v6h-6zM4.500 178.500h16v13h-16z"/><path d="m9 181 7 4-7 4z" fill="#232323"/><circle cx="26" cy="206" r="4"/><path d="M24 206h4"/></svg>
    </div>
    <form class="command">
      <span class="cgrip"></span>
      <button type="button" class="cx" aria-label="Close command line"><svg width="10" height="10"><path d="M1 1l8 8M9 1 1 9" stroke="#bbb" stroke-width="2"/></svg></button>
      <button type="button" class="cw" aria-label="Customize"><svg width="14" height="14" viewBox="0 0 14 14"><path d="M5 1 4 4 1 4C0 8 4 9 6 8l5 5c2 1 3-1 2-2L8 6c1-2 0-5-3-5z" fill="#bbb" stroke="#222"/></svg></button>
      <div class="cline">
        <svg width="24" height="14" viewBox="0 0 24 14"><path d="M.5.500h14v13H.5z" fill="#929aa6" stroke="#6b7380"/><path d="m3 4 4 3-4 3M8 10.500h4" fill="none" stroke="#333"/><path d="M18 5h6l-3 4z" fill="#555"/></svg>
        <input type="text" placeholder="Type a command" aria-label="Command"><svg width="8" height="5"><path d="M0 5h7L3.500 0z" fill="#111"/></svg>
      </div>
    </form>
  </div>
</div>
<footer class="status"></footer>
</body>
</html>
```

FILE: styles.css
```css
* { box-sizing: border-box; }
body {
  margin: 0; height: 100vh; overflow: hidden; display: flex; flex-direction: column;
  background: #5c5c5c; color: #f0f0f0;
  font: 11px/15px "Open Sans", "Noto Sans", sans-serif;
}
button, input, select { font: inherit; color: inherit; background: none; border: 0; padding: 0; margin: 0; }
button { display: flex; align-items: center; justify-content: center; }
a { color: inherit; text-decoration: none; }
h1, h2, h3, ul { margin: 0; padding: 0; font-weight: 400; font-size: inherit; }
svg { flex: none; display: block; }
.defs { position: absolute; width: 0; height: 0; }
.grip { fill: #dbe8ff; stroke: #4a86e0; }
.letter { font: 300 38px "Open Sans", sans-serif; fill: #e4e4e4; }

.caret { flex: none; width: 0; height: 0; border: 3px solid transparent; border-top: 3px solid #f0f0f0; border-bottom: 0; }
.caret.wide { border-width: 4px 4px 0; }
.caret.dark { border-width: 4px 4px 0; border-top-color: #333; }

/* title bar and ribbon tabs */
.top { display: grid; grid-template: 25px 20px / 41px 1fr; background: #535353; border-right: 4px solid #989898; }
.app { grid-row: 1 / 3; align-self: start; height: 41px; gap: 2px; background: linear-gradient(#d0d0d0, #8c8c8c 55%, #6a6a6a); border: 1px solid #000; box-shadow: inset 0 0 0 1px #aaa; }
.titlebar { display: flex; align-items: flex-start; margin-right: -4px; background: #989898; border-bottom: 2px solid #333; }
.quick { display: flex; align-items: center; width: 214px; height: 23px; padding-left: 9px; gap: 8px; background: #a9a9a9; border: 1px solid #808080; border-left: 0; border-top-color: #bbb; }
.quick .caret { margin: 0 1px 0 -3px; }
.titlebar h1 { flex: 1; text-align: center; padding-right: 14px; font-size: 15px; line-height: 24px; color: #1b1b1b; white-space: nowrap; }
.info { display: flex; align-items: center; width: 444px; height: 23px; background: #a9a9a9; border-bottom: 1px solid #808080; color: #fff; }
.expand { width: 14px; }
.search { width: 180px; height: 22px; padding: 0 3px; background: #737373; border: 1px solid #333; font-style: italic; }
.search::placeholder { color: #d4d4d4; opacity: 1; }
.find { margin: 0 8px 0 4px; }
.signin { gap: 5px; flex: 1; justify-content: flex-start; }
.signin .caret { margin-left: auto; margin-right: 9px; }
.connect { gap: 4px; margin-left: 6px; }
.help { gap: 5px; margin: 0 4px 0 12px; padding-left: 7px; border-left: 1px solid #b4b4b4; }
.qmark { font: bold 13px "Open Sans", sans-serif; fill: #2b5fb8; }
.window { display: flex; justify-content: flex-end; width: 124px; padding-right: 2px; }
.window button { width: 27px; height: 19px; }
.window .close { width: 45px; background: #c75050; }
.tabs { display: flex; padding-left: 6px; border-bottom: 1px solid #2e2e2e; color: #d6d6d6; }
.tabs a { padding: 0 9px 0 10px; height: 17px; margin: 2px 1px 0; line-height: 15px; }
.tabs .on { margin: 2px 0 -1px; height: 18px; padding: 0 9px; border: 1px solid #2e2e2e; border-bottom: 0; background: linear-gradient(#787878, #5d5d5d); color: #f4f4f4; line-height: 14px; }
.fold { gap: 5px; margin-left: 22px; }

/* ribbon */
.ribbon { display: flex; flex: none; height: 99px; margin-right: 4px; padding-left: 2px; background: linear-gradient(#4d4d4d, #363636); border-bottom: 2px solid #8a8a8a; }
.panel { flex: none; display: flex; flex-direction: column; background: #5d5d5d; border-right: 1px solid #3c3c3c; box-shadow: inset 1px 0 #6a6a6a; }
.panel h2 { position: relative; display: flex; align-items: center; justify-content: center; gap: 7px; height: 18px; margin: 0 1px; background: linear-gradient(#4b4b4b, #434343); }
.panel .body { flex: 1; display: flex; }
.launch { position: absolute; right: 3px; top: 7px; }
.big { flex: none; flex-direction: column; justify-content: flex-start; padding-top: 7px; white-space: nowrap; line-height: 15px; text-align: center; }
.big svg { margin-bottom: 3px; }
.big .caret { margin-top: 2px; }
.col { flex: none; display: flex; flex-direction: column; padding-top: 4px; }
.cmd { height: 24px; gap: 5px; justify-content: flex-start; white-space: nowrap; }
.cmd .caret { margin-left: 2px; }
.trim .cmd .caret { margin-left: auto; }

.draw { width: 224px; }
.draw .big { width: 42px; }
.draw .big:nth-child(2) { width: 46px; }
.draw .big:nth-child(3) { width: 54px; }
.draw .big:nth-child(4) { width: 38px; }
.draw .col { margin-left: 5px; }
.modify { width: 250px; }
.modify .body { padding-left: 7px; }
.modify .col { width: 71px; }
.modify .trim { width: 62px; margin-right: 12px; }
.modify .col:last-child { width: 16px; }
.annotation { width: 127px; }
.annotation .big { width: 51px; }
.layers { width: 273px; }
.layers .big { width: 62px; }
.stack { flex: 1; padding: 5px 2px 0 0; }
.grid { display: grid; grid-template-columns: 24px 24px 24px 24px 1fr; padding: 1px 0 0 4px; }
.block { width: 161px; }
.block .big { width: 44px; }
.props { width: 264px; }
.props .big { width: 62px; }
.lines { flex: 1; display: grid; grid-template: repeat(3, 22px) / 16px 1fr; gap: 2px; align-content: start; align-items: center; padding: 5px 2px 0; }
.groups { width: 70px; }
.groups .big { width: 43px; }
.groups .cmd { width: 24px; justify-content: center; }
.active { background: #5f82bd; border: 1px solid #263a5e; }
.utilities { width: 97px; }
.utilities .big { width: 73px; }
.clipboard { width: 80px; }
.clipboard .big { width: 56px; }
.view { width: 62px; }
.view .big { flex: 1; }

.combo { display: flex; align-items: center; height: 22px; padding-right: 1px; background: linear-gradient(#757575, #585858); border: 1px solid #333; }
.combo select { flex: 1; min-width: 0; appearance: none; line-height: 18px; }
.combo option { color: #111; }
.swatch { width: 16px; height: 16px; margin: 0 10px 0 12px; background: #fff; border: 1px solid #aaa; }
.rule { width: 59px; height: 1px; margin: 0 3px 0 8px; background: #fff; }
.layer { padding-left: 5px; }
.layer .swatch { width: 14px; height: 14px; margin: 0 5px 0 0; border-color: #222; }

/* drawing tabs */
.files { display: flex; flex: none; height: 25px; margin-right: 4px; padding: 3px 0 0 15px; background: #383838; }
.file { position: relative; display: flex; align-items: center; width: 205px; padding-left: 17px; gap: 12px; }
.file a, .file button { position: relative; }
.shape { position: absolute; left: 0; bottom: 0; }
.newfile { align-self: flex-start; margin-top: 5px; }

/* palettes and drawing area */
.work { flex: 1; min-height: 0; display: flex; padding: 4px 3px 0 0; background: linear-gradient(90deg, #5c5c5c calc(100% - 3px), #8f8f8f 0); }
.strip { display: flex; flex-direction: column; align-items: center; justify-content: space-between; width: 23px; margin: 5px 3px 0 1px; padding: 2px 0 396px 2px; background: linear-gradient(90deg, #8e8e8e, #6c6c6c); border: 1px solid #333; }
.dots { width: 9px; height: 4px; background: repeating-linear-gradient(90deg, #333 0 1px, transparent 1px 2px); }
.vertical { writing-mode: vertical-rl; transform: rotate(180deg); font-size: 14px; line-height: 18px; color: #f4f4f4; }
.recovery { display: flex; flex-direction: column; width: 270px; margin: 2px 2px 0 0; }
.recovery h2 { display: flex; align-items: center; gap: 5px; height: 26px; padding-left: 6px; background: #515151; border-radius: 4px 4px 0 0; font-size: 15px; line-height: 25px; white-space: nowrap; }
.griphandle { width: 4px; height: 11px; background: repeating-linear-gradient(#333 0 1px, transparent 1px 2px); }
.recovery h3 { display: flex; align-items: center; justify-content: space-between; height: 22px; padding: 0 5px 0 9px; background: #505050; border-bottom: 1px solid #303030; font-weight: 700; font-size: 11px; color: #fff; }
.recovery h3 button { width: 7px; height: 3px; background: #eee; border-bottom: 1px solid #333; }
.recovery section { border: 1px solid #333; border-bottom-width: 2px; }
.backup { height: 253px; }
.details { flex: 1; }
.preview { height: 191px; }
.splitter { display: flex; justify-content: center; align-items: center; height: 7px; background: #505050; border: solid #333; border-width: 0 1px 1px; }
.splitter span { width: 18px; height: 2px; background: repeating-linear-gradient(90deg, #2c2c2c 0 2px, transparent 2px 4px); }
.recovery ul { list-style: none; padding: 0 7px; background: linear-gradient(#333, #333) 11px 9px / 1px 108px no-repeat; }
.recovery li { display: flex; align-items: center; height: 18px; white-space: nowrap; }
.recovery li button { width: 9px; height: 9px; margin-right: 6px; background: #fff; border: 1px solid #aaa; color: #1c3f94; font-size: 10px; line-height: 7px; }
.recovery li svg { margin-right: 5px; }

.canvas { position: relative; flex: 1; background: #000; overflow: hidden; }
.model { position: absolute; width: 100%; height: 100%; }
.ink { fill: none; stroke: #f2f2f2; }
.drill { stroke-width: 2; }
.axis { fill: #f2f2f2; stroke: none; font: 300 18px "Open Sans", sans-serif; }
.style { position: absolute; left: 52px; top: 6px; color: #dccb2c; }
.viewwin { position: absolute; right: 12px; top: 8px; display: flex; gap: 10px; }
.cube { position: absolute; right: 13px; top: 36px; }
.cube text { font: bold 21px "Liberation Sans", Arial, sans-serif; fill: #9a9a9a; text-anchor: middle; }
.cube .face { font: bold 13px "Roboto", sans-serif; fill: #464a50; }
.wcs { position: absolute; right: 60px; top: 193px; width: 48px; height: 18px; gap: 6px; background: #84858f; border: 1px solid #a0a0a6; border-radius: 5px; color: #3c3f46; font: 11px/16px "Liberation Sans", Arial, sans-serif; }
.navbar { position: absolute; right: 4px; top: 236px; width: 32px; height: 212px; background: #414141; border-radius: 3px; }
.command { position: absolute; left: 215px; right: 216px; bottom: -2px; display: flex; align-items: center; height: 22px; background: linear-gradient(#5c5c5c, #333); border-top: 1px solid #555; }
.cgrip { width: 5px; height: 16px; margin: 0 6px 0 4px; background: repeating-linear-gradient(#888 0 2px, transparent 2px 4px); }
.cx { margin-right: 11px; }
.cline { flex: 1; display: flex; align-items: center; height: 100%; margin-left: 3px; padding: 2px 4px 0 6px; gap: 7px; background: #b2b2b2; border-radius: 3px 0 0 0; }
.cline input { flex: 1; min-width: 0; font: italic 12px/16px "DejaVu Sans Mono", monospace; color: #222; }
.cline input::placeholder { color: #5f5f5f; opacity: 1; }
.status { flex: none; height: 2px; background: linear-gradient(90deg, transparent 52px, #999 52px 110px, transparent 110px 114px, #999 114px 172px, transparent 172px 424px, #999 424px 482px, transparent 482px 548px, #999 548px 606px, transparent 606px 857px, #999 857px 916px, transparent 916px 1291px, #999 1291px 1350px, transparent 1350px) 0 1px no-repeat #444; }
```
